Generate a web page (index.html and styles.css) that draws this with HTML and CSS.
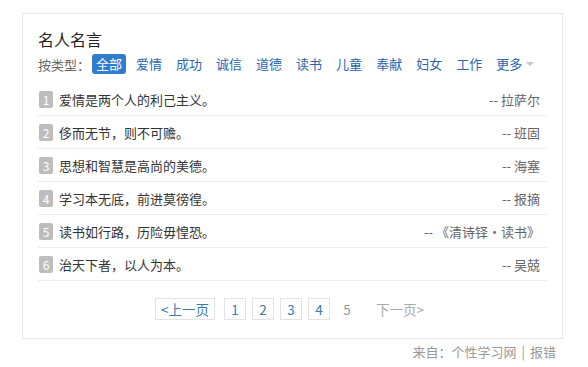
FILE: index.html
```html
<!DOCTYPE html>
<html lang="zh-CN">
<head>
    <meta charset="UTF-8">
    <title>名人名言</title>
    <link rel="stylesheet" href="styles.css">
</head>
<body>

    <div class="mingyan-box">
        <h2 class="titulo">名人名言</h2>

        <div class="tipos">
            <span class="tipos-label">按类型：</span>
            <a href="#" class="tipo ativo">全部</a>
            <a href="#" class="tipo">爱情</a>
            <a href="#" class="tipo">成功</a>
            <a href="#" class="tipo">诚信</a>
            <a href="#" class="tipo">道德</a>
            <a href="#" class="tipo">读书</a>
            <a href="#" class="tipo">儿童</a>
            <a href="#" class="tipo">奉献</a>
            <a href="#" class="tipo">妇女</a>
            <a href="#" class="tipo">工作</a>
            <a href="#" class="tipo mais">更多<span class="seta"></span></a>
        </div>

        <ul class="lista">
            <li><span class="num">1</span><span class="frase">爱情是两个人的利己主义。</span><span class="autor">-- 拉萨尔</span></li>
            <li><span class="num">2</span><span class="frase">侈而无节，则不可赡。</span><span class="autor">-- 班固</span></li>
            <li><span class="num">3</span><span class="frase">思想和智慧是高尚的美德。</span><span class="autor">-- 海塞</span></li>
            <li><span class="num">4</span><span class="frase">学习本无底，前进莫徬徨。</span><span class="autor">-- 报摘</span></li>
            <li><span class="num">5</span><span class="frase">读书如行路，历险毋惶恐。</span><span class="autor">-- 《清诗铎·读书》</span></li>
            <li><span class="num">6</span><span class="frase">治天下者，以人为本。</span><span class="autor">-- 吴兢</span></li>
        </ul>

        <div class="paginacao">
            <a href="#" class="pag">&lt;上一页</a>
            <a href="#" class="pag">1</a>
            <a href="#" class="pag">2</a>
            <a href="#" class="pag">3</a>
            <a href="#" class="pag">4</a>
            <span class="pag atual">5</span>
            <span class="pag desativado">下一页&gt;</span>
        </div>
    </div>

    <div class="rodape">来自：<a href="#">个性学习网</a><span class="sep">|</span><a href="#">报错</a></div>

</body>
</html>
```

FILE: styles.css
```css
body {
    margin: 0;
    padding: 13px 0 0 22px;
    font-family: "Noto Sans CJK SC", "Noto Sans", sans-serif;
    font-size: 13px;
    color: #333333;
    background-color: #ffffff;
}

a {
    text-decoration: none;
}

.mingyan-box {
    width: 541px;
    box-sizing: border-box;
    border: 1px solid #e6e6e6;
    padding: 14px 15px 18px 15px;
}

.titulo {
    margin: 0;
    font-size: 16px;
    font-weight: normal;
    line-height: 22px;
    color: #222222;
}

.tipos {
    display: flex;
    align-items: center;
    height: 20px;
    margin-top: 4px;
}

.tipos-label {
    color: #666666;
    margin-right: 2px;
}

.tipo {
    padding: 0 4px;
    margin-right: 6px;
    line-height: 20px;
    color: #2a66b0;
    border-radius: 3px;
}

.tipo.ativo {
    background-color: #2f7dd0;
    color: #ffffff;
}

.tipo.mais {
    display: flex;
    align-items: center;
}

.seta {
    width: 0;
    height: 0;
    margin-left: 4px;
    border-left: 4px solid transparent;
    border-right: 4px solid transparent;
    border-top: 4px solid #c4c4c4;
}

.lista {
    list-style: none;
    margin: 9px 0 0 0;
    padding: 0;
}

.lista li {
    display: flex;
    align-items: center;
    height: 32px;
    border-bottom: 1px solid #ececec;
}

.num {
    width: 14px;
    height: 17px;
    line-height: 17px;
    margin: 0 6px 0 1px;
    background-color: #bdbdbd;
    color: #ffffff;
    font-size: 12px;
    text-align: center;
    border-radius: 2px;
}

.frase {
    flex: 1;
    color: #333333;
}

.autor {
    color: #666666;
    margin-right: 7px;
}

.paginacao {
    display: flex;
    justify-content: center;
    align-items: center;
    gap: 6px;
    margin-top: 17px;
}

.pag {
    height: 20px;
    line-height: 20px;
    min-width: 10px;
    padding: 0 5px;
    border: 1px solid #e3e3e3;
    color: #3b78b4;
    font-size: 13.5px;
    text-align: center;
}

.pag:first-child {
    margin-right: 3px;
}

.pag.atual {
    border-color: transparent;
    color: #999999;
    margin-right: 6px;
}

.pag.desativado {
    border-color: transparent;
    color: #aaaaaa;
}

.rodape {
    width: 534px;
    text-align: right;
    margin-top: 4px;
    line-height: 18px;
    color: #999999;
}

.rodape a {
    color: #999999;
}

.rodape .sep {
    padding: 0 5px;
}
```
